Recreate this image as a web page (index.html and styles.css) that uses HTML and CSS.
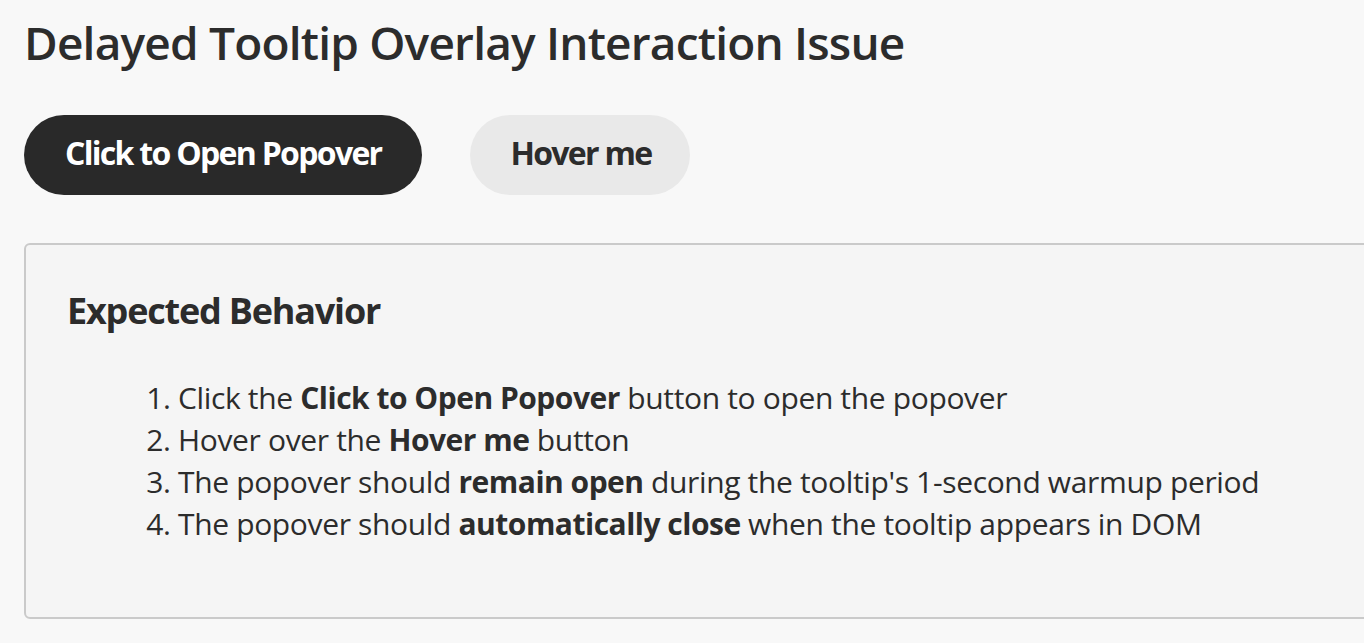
FILE: index.html
```html
<!DOCTYPE html>
<html lang="en">
<head>
<meta charset="utf-8">
<title>Delayed Tooltip Overlay Interaction Issue</title>
<link rel="stylesheet" href="styles.css">
</head>
<body>
<main class="page">
  <h1 class="title">Delayed Tooltip Overlay Interaction Issue</h1>
  <div class="actions">
    <button class="btn btn-primary" type="button">Click to Open Popover</button>
    <button class="btn btn-secondary" type="button">Hover me</button>
  </div>
  <section class="panel">
    <h2 class="panel-title">Expected Behavior</h2>
    <ol class="steps">
      <li>Click the <strong>Click to Open Popover</strong> button to open the popover</li>
      <li>Hover over the <strong>Hover me</strong> button</li>
      <li>The popover should <strong>remain open</strong> during the tooltip's 1-second warmup period</li>
      <li>The popover should <strong>automatically close</strong> when the tooltip appears in DOM</li>
    </ol>
  </section>
</main>
</body>
</html>
```

FILE: styles.css
```css
html, body {
  margin: 0;
  padding: 0;
  background: #f8f8f8;
  overflow-x: hidden;
}

body {
  font-family: "Open Sans", "Noto Sans", sans-serif;
  color: #2c2c2c;
}

.page {
  padding: 15px 0 0 24px;
}

.title {
  margin: 0;
  font-size: 46px;
  line-height: 55px;
  font-weight: 600;
  letter-spacing: -0.8px;
  color: #2c2c2c;
}

.actions {
  display: flex;
  gap: 48px;
  margin-top: 45px;
}

.btn {
  box-sizing: border-box;
  height: 80px;
  border: none;
  border-radius: 40px;
  padding: 0 41px 5px;
  font-family: inherit;
  font-size: 32px;
  font-weight: 700;
  letter-spacing: -1.7px;
  cursor: pointer;
}

.btn-primary {
  background: #292929;
  color: #ffffff;
}

.btn-secondary {
  background: #e9e9e9;
  color: #2c2c2c;
  padding-left: 40px;
  padding-right: 39px;
}

.panel {
  margin-top: 48px;
  width: 1400px;
  box-sizing: border-box;
  background: #f5f5f5;
  border: 2px solid #cacaca;
  border-radius: 6px;
  padding: 44px 41px 72px;
}

.panel-title {
  margin: 0;
  font-size: 36px;
  line-height: 44px;
  font-weight: 700;
  letter-spacing: -1.2px;
}

.steps {
  margin: 44px 0 0;
  padding-left: 111px;
  font-size: 30px;
  line-height: 42px;
  letter-spacing: -0.35px;
}

.steps strong {
  font-weight: 700;
  letter-spacing: -0.5px;
}
```
